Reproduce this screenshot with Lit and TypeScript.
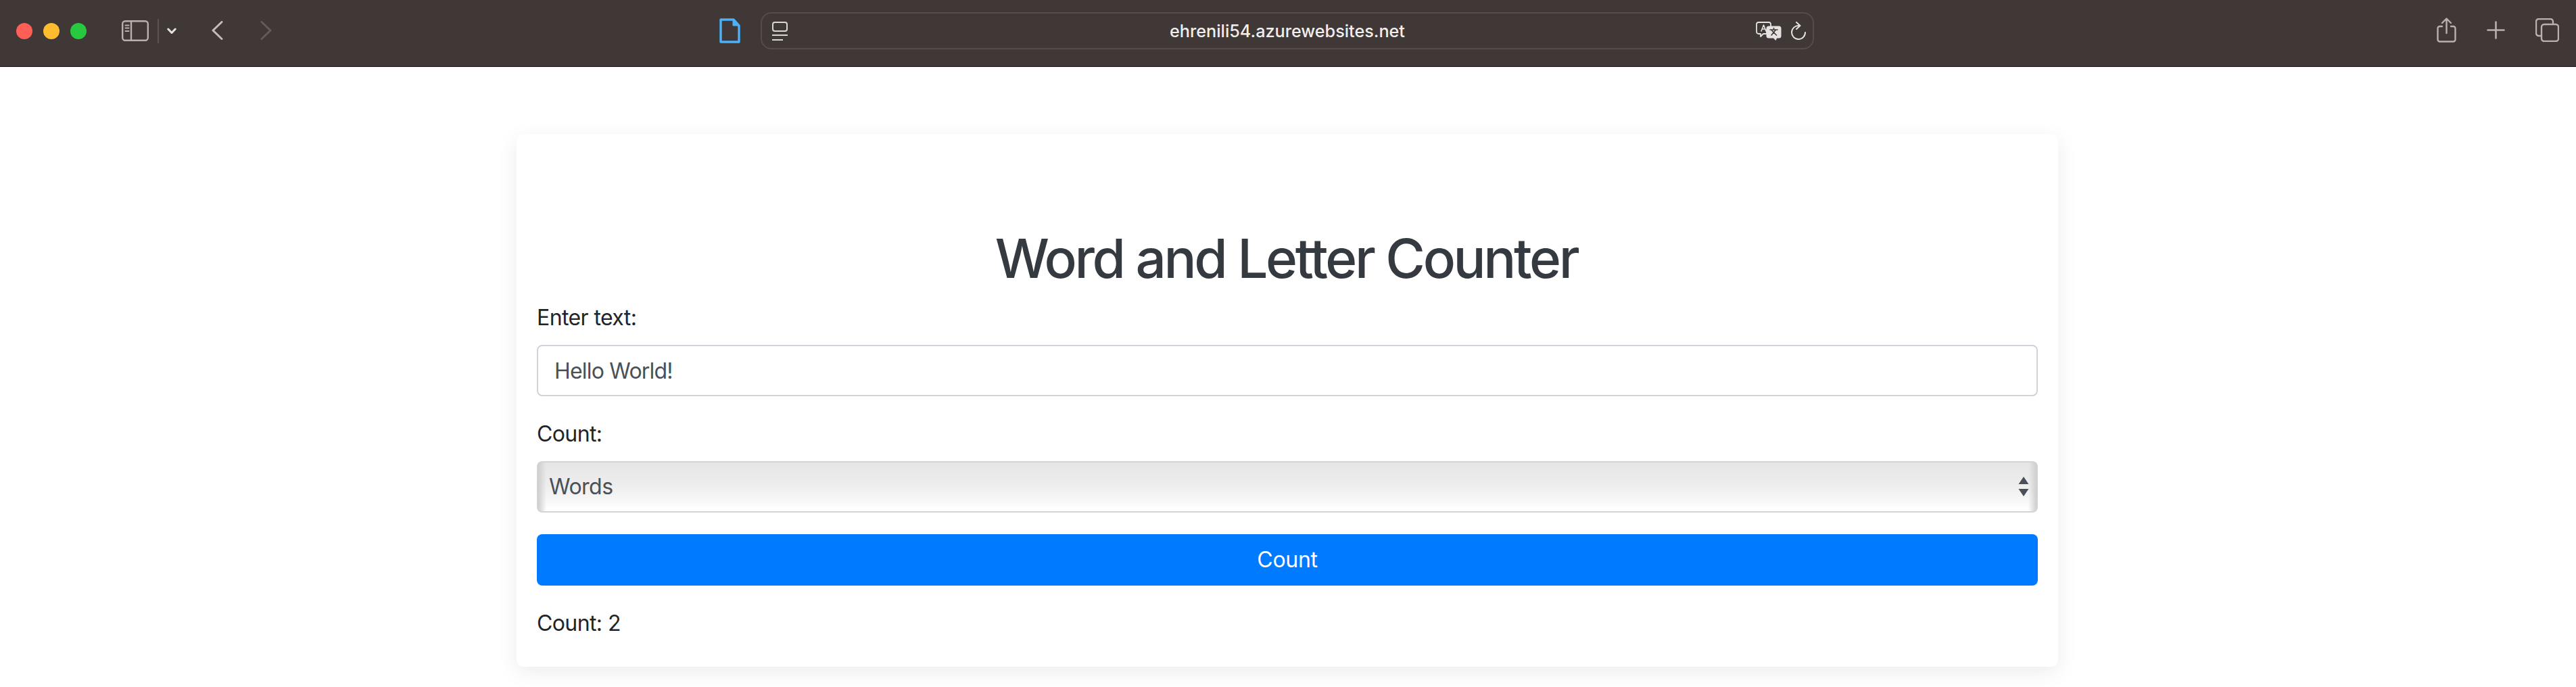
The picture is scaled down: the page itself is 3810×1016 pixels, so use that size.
import { LitElement, html, css } from "lit";
import { customElement } from "lit/decorators.js";

@customElement("app-root")
export class AppRoot extends LitElement {
  static styles = css`
    :host { display: block; background: #fff; font-family: Inter, "Liberation Sans", sans-serif; min-height: 1016px; overflow: hidden; height: 1016px; }
    * { box-sizing: border-box; }
    .bar { height: 99px; background: #3f3837; border-bottom: 1px solid #171515; display: flex; align-items: flex-start; position: relative; }
    .bar svg { display: block; flex: none; fill: none; stroke-linecap: round; stroke-linejoin: round; }
    .dot { width: 24px; height: 24px; border-radius: 50%; flex: none; margin-top: 34px; }
    .red { background: #ff5f57; margin-left: 24px; }
    .yellow { background: #febc2e; margin-left: 16px; }
    .green { background: #28c840; margin-left: 16px; }
    .sidebar { margin-left: 52px; margin-top: 30px; }
    .divider { width: 2px; height: 36px; background: #5a5352; margin-left: 13px; margin-top: 28px; flex: none; }
    .chev { margin-left: 12px; margin-top: 41px; }
    .back { margin-left: 52px; margin-top: 31px; }
    .fwd { margin-left: 55px; margin-top: 31px; }
    .doc { margin-left: 662px; margin-top: 27px; }
    .url { margin-left: 30px; margin-top: 18px; width: 1558px; height: 55px; border: 2px solid #544d4c; border-radius: 16px; display: flex; align-items: center; position: relative; flex: none; }
    .url .reader { margin-left: 15px; }
    .host { position: absolute; left: 0; right: 0; top: 0; bottom: 0; display: flex; align-items: center; justify-content: center; color: #f1eeee; font-size: 25.2px; font-weight: 500; }
    .tr { margin-left: auto; }
    .reload { margin-left: 13px; margin-right: 10px; }
    .share { margin-left: 921px; margin-top: 26px; }
    .plus { margin-left: 45px; margin-top: 31px; }
    .tabs { margin-left: 45px; margin-top: 27px; }
    .page { padding: 99px 2px 0 0; margin-top: -99px; }
    .card { width: 2280px; margin: 0 auto; margin-top: 99px; height: 788px; background: #fff; border-radius: 10px; box-shadow: 0 8px 30px rgba(0,0,0,.08); padding: 136px 30px 0; color: #212529; font-size: 32px; line-height: 48px; letter-spacing: -0.6px; }
    h1 { margin: 0 0 16px; padding-right: 3px; font-size: 80px; line-height: 96px; font-weight: 500; color: #343a40; text-align: center; letter-spacing: -3.4px; }
    label { display: block; margin-bottom: 16px; }
    .group { margin-bottom: 32px; }
    input, select { display: block; width: 100%; height: 76px; border: 2px solid #ced4da; border-radius: 8px; font: inherit; letter-spacing: -0.8px; color: #495057; background: #fff; outline: none; margin: 0; }
    input { padding: 0 24px; }
    .selwrap { position: relative; }
    select { appearance: none; -webkit-appearance: none; padding: 0 16px; letter-spacing: -0.5px; background:
      linear-gradient(90deg, #cfcfcf, rgba(200,200,200,0) 12px, rgba(200,200,200,0) calc(100% - 12px), #cfcfcf),
      linear-gradient(180deg, #e6e6e6 0%, #eeeeee 50%, #fff 100%); }
    .arrows { position: absolute; right: 13px; top: 23px; width: 16px; height: 30px; pointer-events: none; fill: #495057; }
    button { display: block; width: 100%; height: 76px; border: 0; border-radius: 8px; background: #007bff; color: #fff; font: inherit; letter-spacing: -0.3px; padding: 0; margin-bottom: 32px; }
    p { margin: 0; }
  `;

  render() {
    return html`
      <div class="bar">
        <div class="dot red"></div><div class="dot yellow"></div><div class="dot green"></div>
        <svg class="sidebar" width="40" height="31" viewBox="0 0 40 31" stroke="#b9b1b0" stroke-width="2.4">
          <rect x="1.2" y="1.2" width="37.6" height="28.6" rx="4"/><path d="M14 1.2V29.8"/>
          <path d="M5.5 7.5h5M5.5 11.5h5M5.5 16h5" stroke-width="2"/>
        </svg>
        <div class="divider"></div>
        <svg class="chev" width="14" height="10" viewBox="0 0 14 10" stroke="#e6e2e1" stroke-width="3"><path d="M1.8 2 7 7.5 12.2 2"/></svg>
        <svg class="back" width="17" height="28" viewBox="0 0 17 28" stroke="#c4bdbc" stroke-width="3"><path d="M15 1.5 2 14l13 12.5"/></svg>
        <svg class="fwd" width="17" height="28" viewBox="0 0 17 28" stroke="#625b5a" stroke-width="3"><path d="M2 1.5 15 14 2 26.5"/></svg>
        <svg class="doc" width="31" height="37" viewBox="0 0 31 37">
          <path d="M2 2h19l8 9v24H2z" fill="#3f3837" stroke="#4db0fa" stroke-width="3.4" stroke-linejoin="round"/>
          <path d="M20 2v9h9z" fill="#4db0fa" stroke="#4db0fa" stroke-width="1"/>
        </svg>
        <div class="url">
          <svg class="reader" width="23" height="28" viewBox="0 0 23 28" stroke="#d9d6d5" stroke-width="2">
            <rect x="1" y="1" width="21" height="13" rx="3"/><path d="M0 20h23" stroke-linecap="butt"/><path d="M0 27h16" stroke-linecap="butt"/>
          </svg>
          <span class="host">ehrenili54.azurewebsites.net</span>
          <svg class="tr" width="38" height="28" viewBox="0 0 38 28">
            <path d="M4 1h15a3 3 0 0 1 3 3v8H16v6h-5l-4 4v-4H4a3 3 0 0 1-3-3V4a3 3 0 0 1 3-3z" stroke="#e4e1e0" stroke-width="1.8"/>
            <path d="M8 14 11.500 5 15 14M9.200 11h4.600" stroke="#e4e1e0" stroke-width="1.6"/>
            <path d="M19 6.500h15a3.500 3.500 0 0 1 3.500 3.500v11a3.500 3.500 0 0 1-3.500 3.500h-3l-1.500 3.500-3.500-3.500H19a3.500 3.500 0 0 1-3.500-3.500V10A3.500 3.500 0 0 1 19 6.500z" fill="#e4e1e0"/>
            <path d="M21 12h11M26.500 9.500V12M23 20l6.500-8M23.500 13l7 7" stroke="#3f3837" stroke-width="1.6"/>
          </svg>
          <svg class="reload" width="23" height="28" viewBox="0 0 23 28" stroke="#e4e1e0" stroke-width="2">
            <path d="M12.500 6A10 10 0 1 0 22 16"/><path d="M9 1l5.500 5L9 11"/>
          </svg>
        </div>
        <svg class="share" width="29" height="37" viewBox="0 0 29 37" stroke="#b9b1b0" stroke-width="2.400">
          <path d="M8 13H4.500a3 3 0 0 0-3 3v16.500a3 3 0 0 0 3 3h20a3 3 0 0 0 3-3V16a3 3 0 0 0-3-3H21"/>
          <path d="M14.500 23V2M8 8l6.500-6.500L21 8"/>
        </svg>
        <svg class="plus" width="27" height="27" viewBox="0 0 27 27" stroke="#b9b1b0" stroke-width="2.600"><path d="M13.500 1.500v24M1.500 13.500h24"/></svg>
        <svg class="tabs" width="35" height="35" viewBox="0 0 35 35" stroke="#b9b1b0" stroke-width="2.400">
          <path d="M8 26H5a4 4 0 0 1-4-4V5a4 4 0 0 1 4-4h17a4 4 0 0 1 4 4v3"/>
          <rect x="9" y="9" width="25" height="25" rx="4"/>
        </svg>
      </div>
      <div class="page">
        <div class="card">
          <h1>Word and Letter Counter</h1>
          <div class="group"><label>Enter text:</label><input type="text" .value=${"Hello World!"} /></div>
          <div class="group"><label>Count:</label>
            <div class="selwrap">
              <select><option>Words</option><option>Letters</option></select>
              <svg class="arrows" viewBox="0 0 16 30"><path d="M8 0l7.500 11H.5z"/><path d="M.5 18h15L8 29z"/></svg>
            </div>
          </div>
          <button>Count</button>
          <p>Count: 2</p>
        </div>
      </div>
    `;
  }
}
